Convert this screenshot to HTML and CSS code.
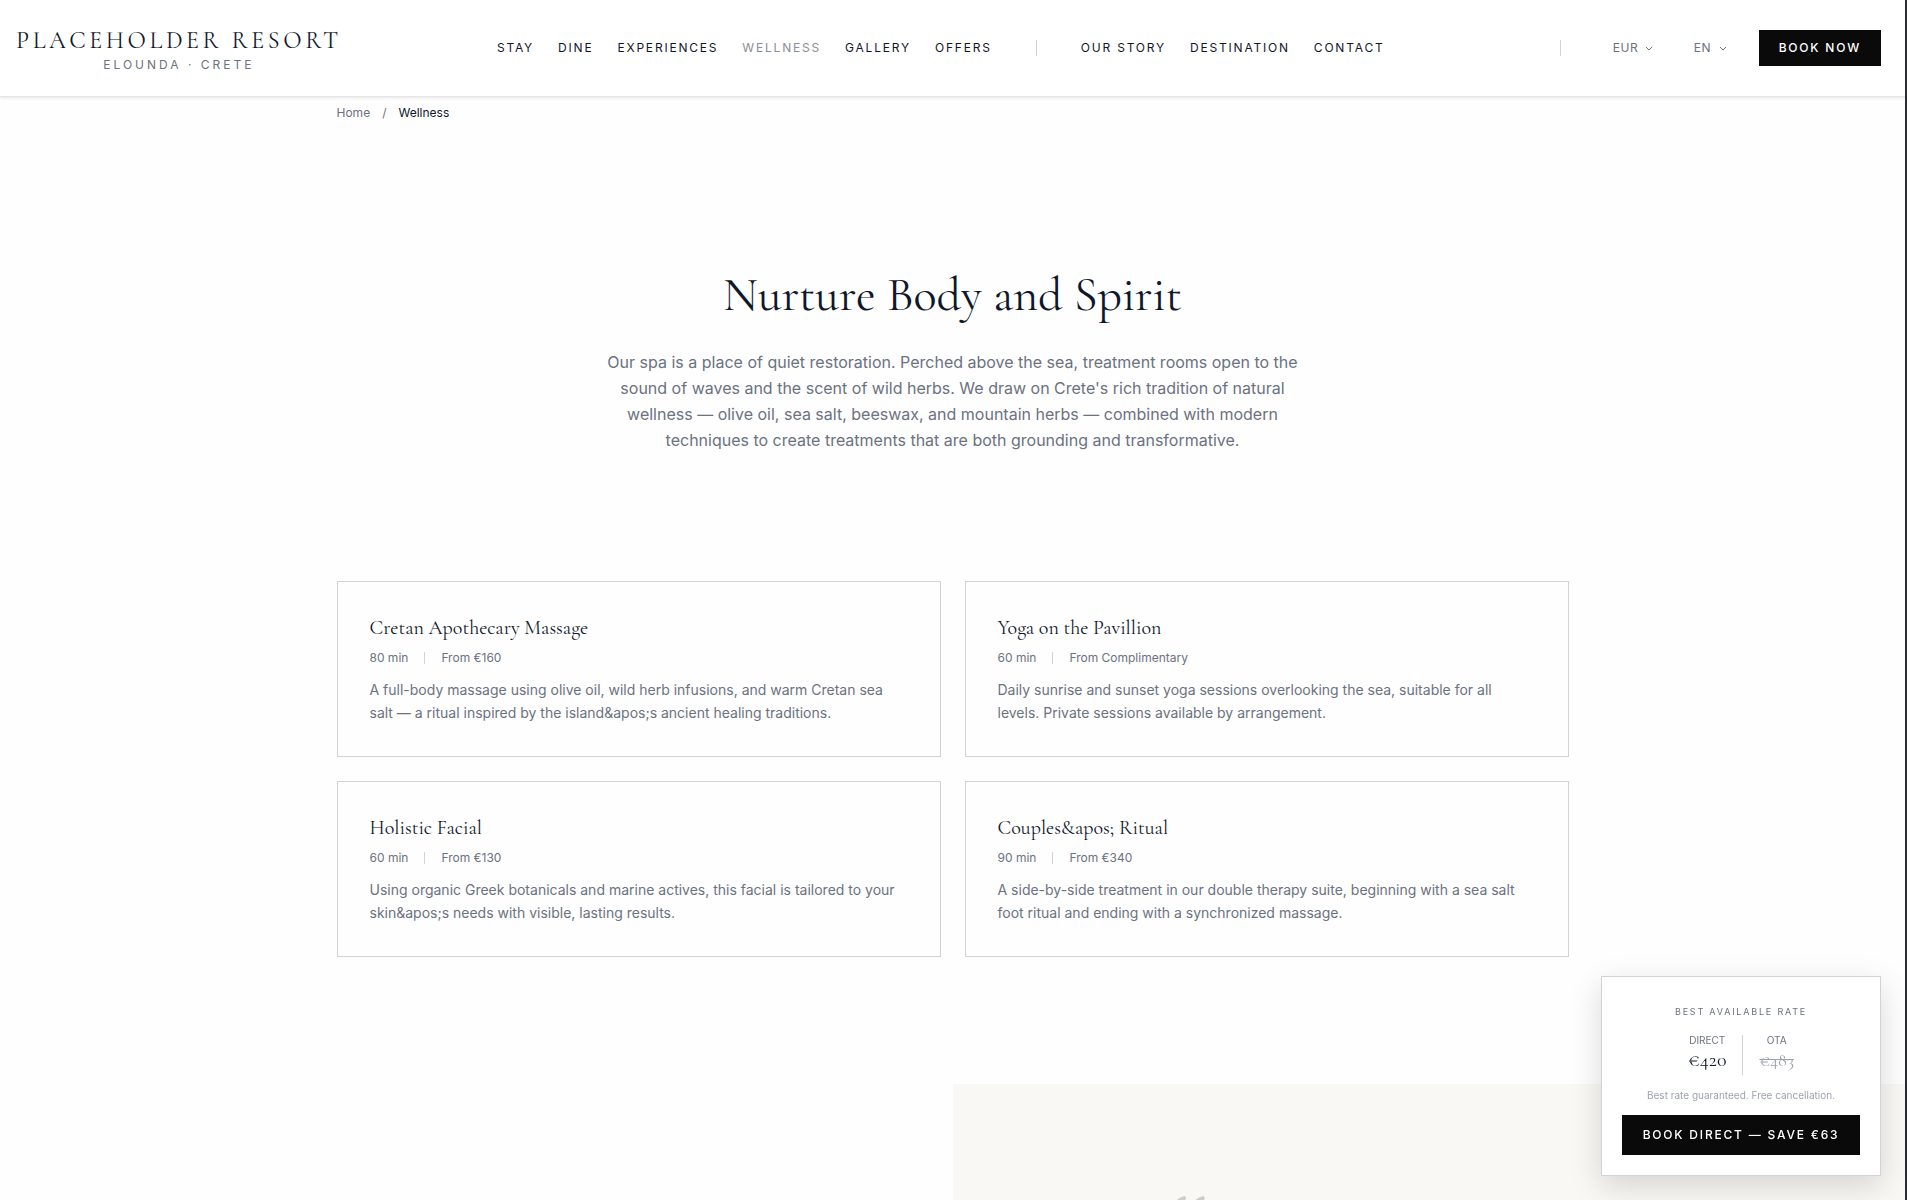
FILE: index.html
```html
<!DOCTYPE html>
<html lang="en">
<head>
    <meta charset="UTF-8">
    <meta name="viewport" content="width=device-width, initial-scale=1.0">
    <title>Wellness - Placeholder Resort</title>
    <link rel="stylesheet" href="styles.css">
</head>
<body>
    <header class="site-header">
        <a href="#" class="logo">
            <span class="logo-name">PLACEHOLDER RESORT</span>
            <span class="logo-place">ELOUNDA · CRETE</span>
        </a>

        <nav class="main-nav" aria-label="Main">
            <div class="nav-group">
                <a href="#">STAY</a>
                <a href="#">DINE</a>
                <a href="#">EXPERIENCES</a>
                <a href="#" class="active">WELLNESS</a>
                <a href="#">GALLERY</a>
                <a href="#">OFFERS</a>
            </div>
            <span class="divider"></span>
            <div class="nav-group">
                <a href="#">OUR STORY</a>
                <a href="#">DESTINATION</a>
                <a href="#">CONTACT</a>
            </div>
        </nav>

        <div class="header-tools">
            <span class="divider"></span>
            <div class="picker">
                <select class="currency" aria-label="Currency">
                    <option>EUR</option>
                    <option>USD</option>
                    <option>GBP</option>
                </select>
                <svg class="chevron" viewBox="0 0 10 10" aria-hidden="true"><path d="M2 4l3 3 3-3"/></svg>
            </div>
            <div class="picker">
                <select class="language" aria-label="Language">
                    <option>EN</option>
                    <option>EL</option>
                    <option>DE</option>
                </select>
                <svg class="chevron" viewBox="0 0 10 10" aria-hidden="true"><path d="M2 4l3 3 3-3"/></svg>
            </div>
            <button type="button" class="btn btn-header">BOOK NOW</button>
        </div>
    </header>

    <main>
        <nav class="container breadcrumb" aria-label="Breadcrumb">
            <a href="#">Home</a>
            <span>/</span>
            <span class="current">Wellness</span>
        </nav>

        <section class="intro">
            <h1>Nurture Body and Spirit</h1>
            <p>Our spa is a place of quiet restoration. Perched above the sea, treatment rooms open to the sound of waves and the scent of wild herbs. We draw on Crete's rich tradition of natural wellness — olive oil, sea salt, beeswax, and mountain herbs — combined with modern techniques to create treatments that are both grounding and transformative.</p>
        </section>

        <section class="container treatments">
            <article class="card">
                <h2>Cretan Apothecary Massage</h2>
                <div class="meta"><span>80 min</span><span class="meta-line"></span><span>From €160</span></div>
                <p>A full-body massage using olive oil, wild herb infusions, and warm Cretan sea salt — a ritual inspired by the island&amp;apos;s ancient healing traditions.</p>
            </article>
            <article class="card">
                <h2>Yoga on the Pavillion</h2>
                <div class="meta"><span>60 min</span><span class="meta-line"></span><span>From Complimentary</span></div>
                <p>Daily sunrise and sunset yoga sessions overlooking the sea, suitable for all levels. Private sessions available by arrangement.</p>
            </article>
            <article class="card">
                <h2>Holistic Facial</h2>
                <div class="meta"><span>60 min</span><span class="meta-line"></span><span>From €130</span></div>
                <p>Using organic Greek botanicals and marine actives, this facial is tailored to your skin&amp;apos;s needs with visible, lasting results.</p>
            </article>
            <article class="card">
                <h2>Couples&amp;apos; Ritual</h2>
                <div class="meta"><span>90 min</span><span class="meta-line"></span><span>From €340</span></div>
                <p>A side-by-side treatment in our double therapy suite, beginning with a sea salt foot ritual and ending with a synchronized massage.</p>
            </article>
        </section>

        <section class="testimonial">
            <div class="testimonial-photo"></div>
            <div class="testimonial-body">
                <svg class="quote-mark" viewBox="0 0 24 24" aria-hidden="true">
                    <path d="M14 21v-7.4c0-5.7 3.7-9.6 9-10.6l1 2.2C21.6 6 20 8.800 20 11h4v10zM0 21v-7.400C0 7.900 3.700 4 9 3l1 2.200C7.600 6 6 8.800 6 11h4v10z"/>
                </svg>
            </div>
        </section>
    </main>

    <!-- floating rate comparison -->
    <aside class="rate-box">
        <div class="rate-title">BEST AVAILABLE RATE</div>
        <div class="rates">
            <div class="rate">
                <span>DIRECT</span>
                <strong>€420</strong>
            </div>
            <div class="rate rate-ota">
                <span>OTA</span>
                <del>€483</del>
            </div>
        </div>
        <div class="rate-note">Best rate guaranteed. Free cancellation.</div>
        <button type="button" class="btn btn-wide">BOOK DIRECT — SAVE €63</button>
    </aside>
</body>
</html>
```
FILE: styles.css
```css
:root {
    --ink: #0f172a;
    --muted: #6b7280;
    --faint: #9ca3af;
    --line: #d1d3d4;
    --black: #0a0a0a;
    --paper: #fefefe;
    --serif: "Cormorant Garamond", "Liberation Serif", serif;
    --sans: Inter, "Liberation Sans", sans-serif;
}
* {
    box-sizing: border-box;
}
html {
    scrollbar-width: none;
}
body {
    margin: 0;
    border-right: 2px solid #2a2c2f;
    background: var(--paper);
    color: var(--ink);
    font-family: var(--sans);
}
h1, h2, p {
    margin: 0;
}
a {
    color: inherit;
    text-decoration: none;
}
.divider {
    width: 1px;
    height: 16px;
    background: var(--line);
}

/* header */
.site-header {
    position: sticky;
    top: 0;
    display: flex;
    align-items: center;
    justify-content: space-between;
    height: 97px;
    padding: 0 24px 0 16px;
    background: #fff;
    border-bottom: 1px solid #e5e5e5;
    box-shadow: 0 1px 3px rgba(0, 0, 0, 0.1);
}
.logo {
    display: flex;
    flex-direction: column;
    align-items: center;
    padding-top: 6px;
}
.logo-name {
    font-family: var(--serif);
    font-size: 24px;
    line-height: 28px;
    letter-spacing: 0.15em;
}
.logo-place {
    color: var(--muted);
    font-size: 12px;
    line-height: 20px;
    letter-spacing: 0.25em;
}
.main-nav {
    display: flex;
    align-items: center;
    gap: 44px;
    margin-right: 20px;
}
.nav-group {
    display: flex;
    gap: 24px;
    font-size: 12px;
    line-height: 16px;
    letter-spacing: 0.15em;
    white-space: nowrap;
}
.nav-group .active {
    color: #8b8d98;
}
.header-tools {
    display: flex;
    align-items: center;
}
.picker {
    display: flex;
    align-items: center;
    color: var(--muted);
}
.picker:first-of-type {
    margin-left: 52px;
}
.picker + .picker {
    margin-left: 40px;
}
.picker select {
    appearance: none;
    height: 16px;
    padding: 0;
    border: 0;
    background: none;
    color: inherit;
    font-family: inherit;
    font-size: 12px;
    line-height: 16px;
    letter-spacing: 0.05em;
}
.currency {
    width: 31px;
}
.language {
    width: 24px;
}
.chevron {
    width: 10px;
    height: 10px;
    fill: none;
    stroke: currentColor;
}
.btn {
    border: 0;
    background: var(--black);
    color: #fff;
    font-family: inherit;
    font-size: 12px;
    font-weight: 500;
    line-height: 16px;
    letter-spacing: 0.15em;
    white-space: nowrap;
    cursor: pointer;
}
.btn-header {
    margin-left: 31px;
    padding: 10px 20px;
}

/* page */
.container {
    max-width: 1280px;
    margin: 0 auto;
    padding: 0 24px;
}
.breadcrumb {
    display: flex;
    gap: 12px;
    padding-top: 8px;
    padding-bottom: 8px;
    color: var(--muted);
    font-size: 12px;
    line-height: 16px;
}
.breadcrumb .current {
    color: var(--ink);
}
.intro {
    max-width: 704px;
    margin: 0 auto;
    padding: 128px 0;
    text-align: center;
}
.intro h1 {
    margin-bottom: 16px;
    font-family: var(--serif);
    font-size: 48px;
    font-weight: 400;
    line-height: 76px;
}
.intro p {
    color: var(--muted);
    font-size: 16px;
    line-height: 26px;
}
.treatments {
    display: grid;
    grid-template-columns: 1fr 1fr;
    gap: 24px;
    padding-bottom: 127px;
}
.card {
    padding: 32px;
    border: 1px solid var(--line);
}
.card h2 {
    margin-bottom: 8px;
    font-family: var(--serif);
    font-size: 20px;
    font-weight: 400;
    line-height: 28px;
}
.meta {
    display: flex;
    align-items: center;
    gap: 16px;
    margin-bottom: 12px;
    color: var(--muted);
    font-size: 12px;
    line-height: 16px;
}
.meta-line {
    width: 1px;
    height: 12px;
    background: var(--line);
}
.card p {
    color: var(--muted);
    font-size: 14px;
    line-height: 23px;
}
.testimonial {
    display: grid;
    grid-template-columns: 1fr 1fr;
}
.testimonial-body {
    padding: 108px 220px;
    background: #f9f8f4;
}
.quote-mark {
    display: block;
    width: 32px;
    height: 32px;
    fill: #ccc;
}

/* rate box */
.rate-box {
    position: fixed;
    right: 26px;
    bottom: 24px;
    width: 280px;
    padding: 24px 20px 20px;
    border: 1px solid var(--line);
    background: #fff;
    box-shadow: 0 10px 30px rgba(0, 0, 0, 0.15);
    text-align: center;
}
.rate-title {
    color: var(--muted);
    font-size: 9px;
    line-height: 22px;
    letter-spacing: 0.2em;
}
.rates {
    display: flex;
    justify-content: center;
    margin: 12px 0 13px;
}
.rate {
    display: flex;
    flex-direction: column;
    padding: 0 16px;
    color: var(--muted);
    font-size: 10px;
    line-height: 10px;
}
.rate strong, .rate del {
    font-family: var(--serif);
    font-weight: 400;
    line-height: 30px;
}
.rate strong {
    color: var(--ink);
    font-size: 20px;
}
.rate del {
    color: var(--faint);
    font-size: 18px;
}
.rate-ota {
    border-left: 1px solid var(--line);
}
.rate-note {
    margin-bottom: 13px;
    color: var(--faint);
    font-size: 10px;
    line-height: 14px;
}
.btn-wide {
    width: 100%;
    padding: 12px 0;
}
```
